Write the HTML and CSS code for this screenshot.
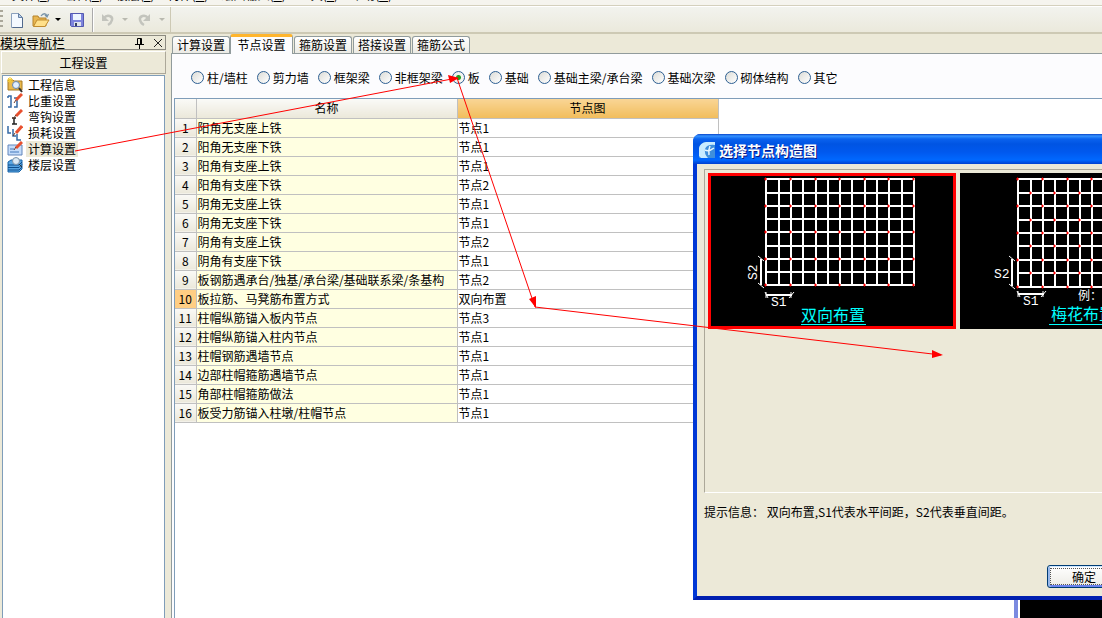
FILE: index.html
```html
<!DOCTYPE html>
<html lang="zh-CN">
<head>
<meta charset="utf-8">
<title>计算设置</title>
<link rel="stylesheet" href="styles.css">
</head>
<body>
<nav class="menubar">
  <span>文件(<u>F</u>)</span><span>编辑(<u>E</u>)</span><span>楼层(<u>L</u>)</span><span>构件(<u>N</u>)</span><span>绘图输入(<u>D</u>)</span><span>工具(<u>T</u>)</span><span>帮助(<u>H</u>)</span>
</nav>
<div class="toolbar">
  <span class="grip"></span>
  <button class="tool" aria-label="新建"><svg width="16" height="16" viewBox="0 0 16 16"><path d="M2.500 1.500h7l4 4v10h-11z" fill="#f4f9ff" stroke="#8ba0bd"/><path d="M9.500 1.500v4h4z" fill="#bcd0ea" stroke="#6580a5"/><path d="M13.500 6v9.500h-10" fill="none" stroke="#51698c"/></svg></button>
  <button class="tool open" aria-label="打开"><svg width="18" height="16" viewBox="0 0 18 16"><path d="M1 14V4h5l1 2h7v8z" fill="#e8b650" stroke="#b5822a"/><path d="M1.500 14.500L5 8h12l-4 6.500z" fill="#ffe08a" stroke="#c08c30"/><path d="M9 4c2-3 5-3 6 0M13 3l2 2 1.500-3" fill="none" stroke="#7893a8" stroke-width="1.300"/></svg></button>
  <span class="caret"></span>
  <button class="tool save" aria-label="保存"><svg width="16" height="16" viewBox="0 0 16 16"><path d="M1.500 1.500h13v13h-12l-1-1z" fill="#7d83dc" stroke="#5359b0"/><path d="M4 2h8v6H4z" fill="#eef6ff"/><path d="M5 10h7v4H5z" fill="#dfe3ec"/><path d="M6 11h2v3H6z" fill="#333d60"/></svg></button>
  <span class="divider"></span>
  <button class="tool" aria-label="撤销" disabled><svg width="16" height="16" viewBox="0 0 16 16"><path d="M4 6c3-4 9-2 8 2-.5 2-2 4-4 5" fill="none" stroke="#c3c4bd" stroke-width="2.500"/><path d="M2 2v7h7z" fill="#c3c4bd"/></svg></button>
  <span class="caret off"></span>
  <button class="tool redo" aria-label="重做" disabled><svg width="16" height="16" viewBox="0 0 16 16"><path d="M12 6C9 2 3 4 4 8c.5 2 2 4 4 5" fill="none" stroke="#c3c4bd" stroke-width="2.500"/><path d="M14 2v7H7z" fill="#c3c4bd"/></svg></button>
  <span class="caret off last"></span>
  <span class="toolbar-end"></span>
</div>
<div class="workspace">
  <aside class="sidebar">
    <header class="dock-title"><span>模块导航栏</span>
      <svg width="32" height="12" viewBox="0 0 32 12"><path d="M4.500 1.500h4v6h-4zM2 7.500h9M6.500 8v4M7.500 2v5" fill="none" stroke="#000"/><path d="M21 2l8 8M29 2l-8 8" stroke="#222"/></svg>
    </header>
    <button class="section-btn">工程设置</button>
    <ul class="nav">
      <li><svg width="16" height="16" viewBox="0 0 16 16"><path d="M1 3h5l1 1h8v9H1z" fill="#e9b94d" stroke="#a97b23"/><circle cx="9" cy="8" r="3.500" fill="#e1efff" stroke="#6685ad"/><path d="M12 11l3 4" stroke="#333" stroke-width="2"/><path d="M3 0v6M0 3h6M1 1l4 4M5 1L1 5" stroke="#f5cd31"/></svg><a href="#">工程信息</a></li>
      <li><svg width="16" height="16" viewBox="0 0 16 16"><path d="M1 3h3v11H1M1 3v2M7 5h3v9H7" fill="none" stroke="#356aa5" stroke-width="1.500"/><path d="M15 1L9 7" stroke="#e8502f" stroke-width="3"/><path d="M9 7l-2 3" stroke="#6d3825"/></svg><a href="#">比重设置</a></li>
      <li><svg width="16" height="16" viewBox="0 0 16 16"><path d="M7 9v6M5 9h4M5 15h5" fill="none" stroke="#222" stroke-width="1.500"/><path d="M15 1L9 7" stroke="#e8502f" stroke-width="3"/><path d="M9 6l-3 4" stroke="#6d3825"/></svg><a href="#">弯钩设置</a></li>
      <li><svg width="16" height="16" viewBox="0 0 16 16"><path d="M1 1v7h3M6 4v7h3M10 9v6h4" fill="none" stroke="#356aa5" stroke-width="1.500"/><path d="M15 1L9 8" stroke="#e8502f" stroke-width="3"/><path d="M8 8l-2 3" stroke="#6d3825"/></svg><a href="#">损耗设置</a></li>
      <li class="current"><svg width="16" height="16" viewBox="0 0 16 16"><path d="M1 4h14v10H1z" fill="#c4dcfa" stroke="#6286bb"/><path d="M3 8h4M3 11h9" stroke="#4478bb"/><path d="M15 1L9 7" stroke="#e8502f" stroke-width="3"/><path d="M9 6l-2 3" stroke="#6d3825"/></svg><a href="#">计算设置</a></li>
      <li><svg width="16" height="16" viewBox="0 0 16 16"><path d="M1 5l3-2h11v9l-3 3H1z" fill="#58a5e2" stroke="#1864a8"/><path d="M1 8h11l3-3M1 10.500h11l3-3M1 13h11l3-3" fill="none" stroke="#0f4f8e"/><circle cx="9" cy="4" r="3.500" fill="#dceaf5" stroke="#7b93aa"/><path d="M12 7l3 3" stroke="#333"/></svg><a href="#">楼层设置</a></li>
    </ul>
  </aside>
  <main class="main">
    <div class="tabs" role="tablist">
      <button class="tab" role="tab">计算设置</button><button class="tab active" role="tab" aria-selected="true">节点设置</button><button class="tab" role="tab">箍筋设置</button><button class="tab" role="tab">搭接设置</button><button class="tab" role="tab">箍筋公式</button>
    </div>
    <section class="pane">
      <div class="radios">
        <label><input type="radio" name="kind">柱/墙柱</label>
        <label><input type="radio" name="kind">剪力墙</label>
        <label><input type="radio" name="kind">框架梁</label>
        <label><input type="radio" name="kind">非框架梁</label>
        <label><input type="radio" name="kind" checked>板</label>
        <label><input type="radio" name="kind">基础</label>
        <label><input type="radio" name="kind">基础主梁/承台梁</label>
        <label><input type="radio" name="kind">基础次梁</label>
        <label><input type="radio" name="kind">砌体结构</label>
        <label><input type="radio" name="kind">其它</label>
      </div>
      <div class="grid-frame">
        <table class="grid">
          <colgroup><col class="c-num"><col class="c-wide"><col class="c-wide"></colgroup>
          <thead><tr><th></th><th>名称</th><th class="picked">节点图</th></tr></thead>
          <tbody>
            <tr><th>1</th><td>阳角无支座上铁</td><td>节点1</td></tr>
            <tr><th>2</th><td>阳角无支座下铁</td><td>节点1</td></tr>
            <tr><th>3</th><td>阳角有支座上铁</td><td>节点1</td></tr>
            <tr><th>4</th><td>阳角有支座下铁</td><td>节点2</td></tr>
            <tr><th>5</th><td>阴角无支座上铁</td><td>节点1</td></tr>
            <tr><th>6</th><td>阴角无支座下铁</td><td>节点1</td></tr>
            <tr><th>7</th><td>阴角有支座上铁</td><td>节点2</td></tr>
            <tr><th>8</th><td>阴角有支座下铁</td><td>节点1</td></tr>
            <tr><th>9</th><td>板钢筋遇承台/独基/承台梁/基础联系梁/条基构</td><td>节点2</td></tr>
            <tr><th class="picked-row">10</th><td>板拉筋、马凳筋布置方式</td><td>双向布置</td></tr>
            <tr><th>11</th><td>柱帽纵筋锚入板内节点</td><td>节点3</td></tr>
            <tr><th>12</th><td>柱帽纵筋锚入柱内节点</td><td>节点1</td></tr>
            <tr><th>13</th><td>柱帽钢筋遇墙节点</td><td>节点1</td></tr>
            <tr><th>14</th><td>边部柱帽箍筋遇墙节点</td><td>节点1</td></tr>
            <tr><th>15</th><td>角部柱帽箍筋做法</td><td>节点1</td></tr>
            <tr><th>16</th><td>板受力筋锚入柱墩/柱帽节点</td><td>节点1</td></tr>
          </tbody>
        </table>
      </div>
    </section>
  </main>
</div>
<div class="back-window"></div>
<div class="dialog" role="dialog" aria-labelledby="dlg-title">
  <header class="dialog-title">
    <svg width="16" height="16" viewBox="0 0 16 16"><path d="M0 16V5l5-5h11v16z" fill="#3f8fdc"/><path d="M0 14V6q1-5 7-6h9v3Q8 2 6 7q-1 5 3 9H2z" fill="#c8ebff"/><path d="M6 8q4 2 9-2M11 4q-2 4-1 9" stroke="#e8f7ff" fill="none" stroke-width="1.500"/></svg>
    <h1 id="dlg-title">选择节点构造图</h1>
  </header>
  <div class="dialog-body">
    <div class="choices">
      <button class="choice chosen" aria-label="双向布置"><svg width="248" height="156" viewBox="0 0 248 156">
        <path class="mesh" d="M58 6V112M71 6V112M83 6V112M95 6V112M108 6V112M120 6V112M132 6V112M144 6V112M157 6V112M169 6V112M181 6V112M194 6V112M206 6V112M57 6H207M57 20H207M57 33H207M57 46H207M57 59H207M57 73H207M57 86H207M57 99H207M57 112H207"/>
        <defs><path id="knots" d="M56 6h3M81 6h3M106 6h3M130 6h3M155 6h3M179 6h3M204 6h3M57.500 4.500v3M82.500 4.500v3M107.500 4.500v3M131.500 4.500v3M156.500 4.500v3M180.500 4.500v3M205.500 4.500v3"/></defs>
        <g class="knot"><use href="#knots"/><use href="#knots" y="27"/><use href="#knots" y="53"/><use href="#knots" y="80"/><use href="#knots" y="106"/></g>
        <path class="mesh" d="M53 86V112M58 122H84"/><path class="tick" d="M50 83l6 5M50 110l6 5M57 119l3 6M81 125l5-6M58 119v6M83 119v6"/>
        <text class="dim" x="63" y="133">S1</text><text class="dim" transform="translate(49 107) rotate(-90)">S2</text>
        <text class="caption" x="93" y="148">双向布置</text><path class="rule" d="M93 151.500h65"/>
      </svg></button>
      <button class="choice" aria-label="梅花布置"><svg width="248" height="156" viewBox="0 0 248 156">
        <path class="mesh" d="M58 6V114M71 6V114M83 6V114M95 6V114M108 6V114M120 6V114M132 6V114M144 6V114M157 6V114M169 6V114M181 6V114M194 6V114M206 6V114M57 6H207M57 20H207M57 33H207M57 47H207M57 60H207M57 73H207M57 87H207M57 100H207M57 114H207"/>
        <defs><path id="knots-odd" d="M69 20h3M93 20h3M118 20h3M142 20h3M167 20h3M192 20h3M70.500 18.500v3M94.500 18.500v3M119.500 18.500v3M143.500 18.500v3M168.500 18.500v3M193.500 18.500v3"/></defs>
        <g class="knot"><use href="#knots"/><use href="#knots" y="27"/><use href="#knots" y="54"/><use href="#knots" y="81"/><use href="#knots" y="108"/><use href="#knots-odd"/><use href="#knots-odd" y="27"/><use href="#knots-odd" y="53"/><use href="#knots-odd" y="80"/></g>
        <path class="mesh" d="M52 86V113M58 121H84"/><path class="tick" d="M49 83l6 5M49 111l6 5M57 118l3 6M81 124l5-6M58 118v6M83 118v6"/>
        <text class="dim" x="63" y="132">S1</text><text class="dim" x="34" y="105">S2</text>
        <text class="note" x="118" y="127">例：</text>
        <text class="caption" x="91" y="147">梅花布置</text><path class="rule" d="M89 151.500h70"/>
      </svg></button>
    </div>
    <p class="tip">提示信息： 双向布置,S1代表水平间距，S2代表垂直间距。</p>
    <div class="actions"><button class="ok">确定</button></div>
  </div>
</div>
<svg class="arrows" width="1102" height="618" viewBox="0 0 1102 618">
  <path d="M75 151L457 78L535 307L941 355" fill="none" stroke="#f00"/>
  <path d="M459 78l-11-3 2 8zM536 308l-7-9 7-3zM943 355l-11-5v8z" fill="#f00"/>
</svg>
</body>
</html>
```
FILE: styles.css
```css
* { box-sizing: border-box; }
html, body { height: 100%; }
html { overflow: hidden; }
body {
  margin: 0;
  display: flex;
  flex-direction: column;
  overflow: hidden;
  position: relative;
  background: #ece9d8;
  color: #000;
  font: 12px/16px "Noto Sans CJK SC", sans-serif;
}
button { font: inherit; color: inherit; padding: 0; border: 0; background: none; }

.menubar {
  flex: none;
  display: flex;
  align-items: flex-end;
  gap: 13px;
  height: 6px;
  padding-left: 12px;
  overflow: hidden;
  background: #f5f4ee;
  line-height: 20px;
  border-bottom: 1px solid #d4d0bd;
}
.menubar span { flex: none; }

.toolbar {
  flex: none;
  display: flex;
  align-items: center;
  height: 28px;
  border-top: 1px solid #fff;
  border-bottom: 2px solid #cdc9b4;
  background: linear-gradient(#f2f3ee, #ebe9dc);
}
.grip { width: 3px; height: 20px; margin-right: 6px; background: repeating-linear-gradient(#aaa79a 0 2px, transparent 2px 5px); }
.tool { display: flex; width: 16px; }
.tool.open { width: 18px; margin-left: 7px; }
.tool.save { margin: 0 7px 0 8px; }
.tool.redo { margin-left: 8px; }
.caret { margin-left: 5px; border: 3px solid transparent; border-top-color: #000; border-bottom: 0; }
.caret.off { margin-left: 6px; border-top-color: #b9b9b0; }
.caret.last { margin-left: 7px; }
.divider { width: 2px; height: 24px; margin-right: 6px; border-left: 1px solid #aaa; border-right: 1px solid #fff; }
.toolbar-end { align-self: stretch; margin-left: 5px; border-left: 1px solid #cdc9b4; }

.workspace { flex: 1; min-height: 0; display: flex; gap: 5px; padding-top: 1px; }

.sidebar { flex: none; width: 166px; display: flex; flex-direction: column; }
.dock-title {
  display: flex;
  align-items: center;
  justify-content: space-between;
  height: 15px;
  border: 1px solid #8c8a80;
  border-left: 0;
  font-size: 13px;
  line-height: 13px;
  white-space: nowrap;
}
.section-btn {
  height: 23px;
  margin: 1px 0 1px 1px;
  border: 1px solid;
  border-color: #fff #aca899 #aca899 #fff;
  background: #ece9d8;
}
.nav {
  flex: 1;
  margin: 0 1px 0 2px;
  padding: 1px 0 0 4px;
  list-style: none;
  background: #fff;
  border: 1px solid #7f9db9;
  border-bottom: 0;
}
.nav li { display: flex; gap: 3px; height: 16px; }
.nav svg { flex: none; }
.nav a { padding: 0 2px; color: inherit; text-decoration: none; line-height: 16px; }
.nav .current a { background: #ece9d8; }

.main { flex: 1; min-width: 0; display: flex; flex-direction: column; }
.tabs { flex: none; display: flex; align-items: flex-end; gap: 1px; height: 18px; padding-left: 1px; }
.tab {
  width: 58px;
  height: 17px;
  border: 1px solid #919b9c;
  border-bottom: 0;
  border-radius: 3px 3px 0 0;
  background: linear-gradient(#fff, #ecebe5);
  line-height: 16px;
}
.tab.active {
  width: 63px;
  height: 20px;
  margin: 0 0 -1px -1px;
  padding-bottom: 2px;
  border-top: 3px solid #ffb52d;
  background: #fcfcfe;
  position: relative;
}
.pane {
  flex: 1;
  min-height: 0;
  display: flex;
  flex-direction: column;
  padding-left: 2px;
  border-top: 1px solid #919b9c;
  border-left: 1px solid #919b9c;
  background: #fcfcfe;
}
.radios { flex: none; display: flex; align-items: center; gap: 9px; height: 44px; padding: 3px 0 0 17px; white-space: nowrap; }
.radios label { display: flex; align-items: center; gap: 3px; }
.radios input {
  appearance: none;
  width: 13px;
  height: 13px;
  margin: 0;
  border: 1px solid #2d5f92;
  border-radius: 50%;
  background: linear-gradient(135deg, #dcdcd7, #fff);
}
.radios input:checked { background: radial-gradient(#21a121 0 2px, #f4f4f0 3px); }
.grid-frame { flex: 1; min-height: 0; background: #fff; border: 1px solid #7f9db9; border-right: 0; border-bottom: 0; }
.grid { border-collapse: collapse; table-layout: fixed; width: 543px; }
.c-num { width: 21px; }
.c-wide { width: 261px; }
.grid th, .grid td { height: 19px; padding: 0 1px; border: 1px solid #c0c0c0; border-left: 0; line-height: 16px; font-weight: normal; white-space: nowrap; overflow: hidden; }
.grid thead th { border-top: 0; }
.grid th { background: linear-gradient(#fafaf7, #ebe8da); }
.grid td { background: #fff; text-align: left; }
.grid tbody th { text-align: center; padding: 0; }
.grid td:nth-child(2) { background: #ffffe1; }
.grid th.picked { background: linear-gradient(#f9d595, #f1bd5c); }
.grid th.picked-row { background: #ffce84; }

.back-window { position: absolute; left: 1014px; top: 590px; right: 0; bottom: 0; background: #000; border-left: 4px solid #7b8ae0; box-shadow: inset 2px 0 #fff; }

.dialog {
  position: absolute;
  left: 693px;
  top: 134px;
  width: 534px;
  height: 466px;
  display: flex;
  flex-direction: column;
  background: #ece9d8;
  border: 4px solid #0d4be0;
  border-color: #0831d9 #0831d9 #001fb0 #0038d6;
  border-top: 0;
  border-radius: 8px 8px 0 0;
}
.dialog-title {
  flex: none;
  display: flex;
  align-items: center;
  gap: 4px;
  height: 30px;
  margin: 0 -4px;
  padding: 2px 0 0 6px;
  border-radius: 7px 7px 0 0;
  background: linear-gradient(#0843c8 0, #3593ff 2px, #0a62ee 5px, #0054e3 10px, #0058ee 18px, #0068ff 26px, #0040d0 30px);
}
.dialog-title h1 { margin: 0; font-size: 14px; line-height: 20px; font-weight: bold; color: #fff; text-shadow: 1px 1px #0a1883; }
.dialog-body { flex: 1; display: flex; flex-direction: column; padding: 5px 7px 8px; }
.choices { flex: 1; display: flex; align-items: flex-start; gap: 4px; padding: 3px; border: 1px solid; border-color: #aca899 #fff #fff #aca899; }
.choice { display: flex; flex: none; background: #000; }
.choice.chosen { outline: 3px solid #f00; outline-offset: -3px; }
.mesh { fill: none; stroke: #fff; stroke-width: 2; }
.knot { stroke: #f00; stroke-width: 1; }
.tick { fill: none; stroke: #fff; stroke-width: 1; }
.rule { stroke: #0ff; }
.dim { fill: #fff; font: 13px "Liberation Mono", monospace; }
.note { fill: #fff; font-size: 12px; }
.caption { fill: #0ff; font-size: 16px; }
.tip { margin: 11px 0 45px; line-height: 16px; }
.actions { display: flex; justify-content: center; padding-left: 248px; }
.ok {
  width: 74px;
  height: 23px;
  border: 1px solid #003c74;
  border-radius: 3px;
  background: linear-gradient(#fff, #ecebe5);
  box-shadow: inset 0 1px #cee7ff, inset 2px 0 #98b8ea, inset -2px 0 #98b8ea, inset 0 -2px #6982ee;
  outline: 1px dotted #555;
  outline-offset: -4px;
}

.arrows { position: absolute; left: 0; top: 0; pointer-events: none; }
```
